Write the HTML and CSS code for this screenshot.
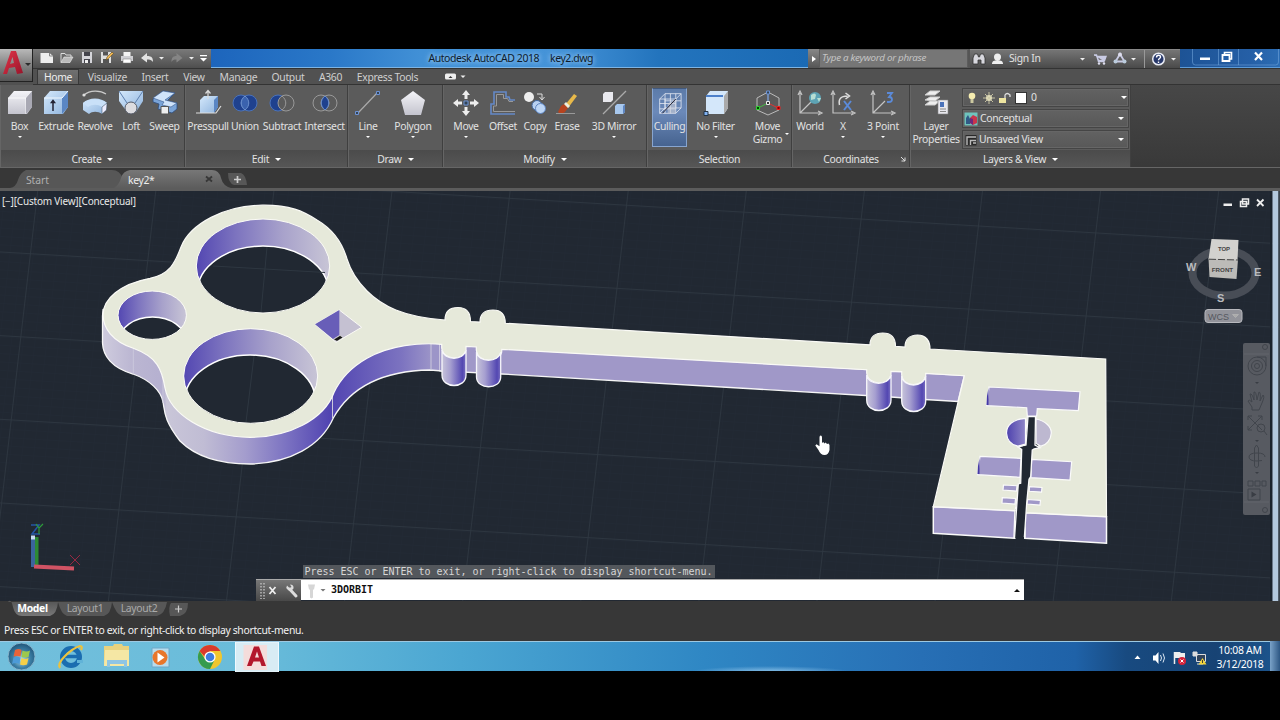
FILE: index.html
```html
<!DOCTYPE html>
<html lang="en">
<head>
<meta charset="utf-8">
<title>Autodesk AutoCAD 2018 - key2.dwg</title>
<link rel="stylesheet" href="styles.css">
</head>
<body>
<svg class="defs" width="0" height="0">
  <defs>
    <linearGradient id="gWhite" x1="0" y1="0" x2="0" y2="1"><stop offset="0" stop-color="#f4f4f8"/><stop offset="1" stop-color="#c4c4ce"/></linearGradient>
    <linearGradient id="gBlue" x1="0" y1="0" x2="1" y2="1"><stop offset="0" stop-color="#d4e8fb"/><stop offset="1" stop-color="#8fb4de"/></linearGradient>
    <linearGradient id="gRed" x1="0" y1="0" x2="1" y2="1"><stop offset="0" stop-color="#e2364a"/><stop offset="1" stop-color="#99142a"/></linearGradient>
  </defs>
</svg>
<div class="app">
  <header class="top">
    <div class="appbtn">
      <svg width="33" height="33" viewBox="0 0 33 33"><path d="M3 25 11 2h5l7 22-6 1-2-7-6 1-2 6zM10 15l4-1-1.500-6z" fill="url(#gRed)" fill-rule="evenodd"/><path d="M25 14h6l-3 3z" fill="#2b2b2b"/></svg>
    </div>
    <div class="titlebar">
      <div class="qat">
        <svg width="178" height="19" viewBox="33 49 178 19">
          <path d="M40.500 53h9l3.500 3v7H40.500z" fill="#eee"/><path d="M49.500 53v3H53" fill="none" stroke="#888"/>
          <path d="M61 62.500V53.500h4l1 1.500h5v2" fill="none" stroke="#ddd"/><path d="M61 62.500 64 57h9l-3 5.500z" fill="#bbb" stroke="#eee" stroke-width=".6"/>
          <path d="M82 52h10v11H82z" fill="#d5d5da"/><path d="M84 52h6v4h-6zM84 59h6v4h-6z" fill="#44444c"/><path d="M85 60h3v3h-3z" fill="#eee"/>
          <path d="M101 52h10v11h-10z" fill="#ddd"/><path d="M103 52h5v3.500h-5zM103 59h6v4h-6z" fill="#555"/><path d="m106 60 1-3 5-5 1.500 1.500-5 5z" fill="#efb654" stroke="#534016" stroke-width=".5"/>
          <path d="M123.500 52h7v4h-7z" fill="#f4f4f4"/><path d="M121 56h12v5h-12z" fill="#cfcfd3"/><path d="M123 59h8v4h-8z" fill="#fff" stroke="#777" stroke-width=".5"/>
          <path d="M147 53v3c5 0 6 2 6 6-1.500-2-3-2.500-6-2.500v3L141 58z" fill="#e3e3e3"/>
          <path d="M159 57h5l-2.500 2.500zM189 57h5l-2.500 2.500z" fill="#eee"/>
          <path d="M176 53v3c-4 0-5 2-5 6 1-2 2-2.500 5-2.500v3l6-4.500z" fill="#858585" transform="matrix(1 0 0 1 .5 0)"/>
          <path d="M200 55h7v1.200h-7zM200 58h7l-3.500 3.500z" fill="#fff"/>
        </svg>
      </div>
      <div class="caption"><span class="glow">Autodesk AutoCAD 2018</span><span class="glow">key2.dwg</span></div>
      <div class="search"><i class="searcharrow"></i><div class="searchbox">Type a keyword or phrase</div></div>
      <div class="info">
        <svg width="18" height="19" viewBox="970 49 18 19"><path d="M973 63v-6l1.500-4h3l1 3h1l1-3h3l1.500 4v6h-4v-4h-3v4z" fill="#d8d8de" stroke="#333" stroke-width=".8"/></svg>
        <svg width="18" height="19" viewBox="989 49 18 19"><circle cx="998.500" cy="56" r="3.500" fill="#eee"/><path d="M993 63c0-3 2-3.500 5.500-4 3.500.5 5.500 1 5.500 4z" fill="#eee"/></svg>
        <span class="signin">Sign In</span>
        <svg width="105" height="19" viewBox="1075 49 105 19"><path d="M1080 57h5l-2.500 2.500zM1131 57h5l-2.500 2.500zM1171 57h5l-2.500 2.500z" fill="#eee"/><path d="M1094 54h2.500l2 6.500h6M1097 55.500h9l-1.500 4h-6z" fill="#c9cbe4" stroke="#c9cbe4" stroke-width="1.400"/><circle cx="1099" cy="62.500" r="1.200" fill="#dde"/><circle cx="1104" cy="62.500" r="1.200" fill="#dde"/><path d="m1120 53-4.500 7.500h9z" fill="none" stroke="#c9cbe4" stroke-width="1.800"/><circle cx="1120" cy="53.500" r="2" fill="#dde"/><circle cx="1115.500" cy="60.500" r="2" fill="#bcd"/><circle cx="1124.500" cy="60.500" r="2" fill="#bcd"/><path d="M1144.500 49v19" stroke="#999"/><circle cx="1158.500" cy="58" r="5.800" fill="#27386b" stroke="#e9ecf5" stroke-width="1.500"/><path d="M1156.500 56.500c0-3 4-3 4-.5 0 1.500-2 1.500-2 3.200M1158.500 60.500v1.500" fill="none" stroke="#fff" stroke-width="1.400"/></svg>
      </div>
      <div class="winctl">
        <svg width="100" height="19" viewBox="1180 49 100 19"><path d="M1192.500 49v13q0 3 3 3h80q3 0 3-3V49M1218.500 49v16M1238.500 49v16" fill="none" stroke="#6ea1d8" opacity=".6"/><path d="M1200 57.500h10v2.500h-10z" fill="#fff"/><path d="M1224.500 52.500h7v6.500h-7z" fill="none" stroke="#fff" stroke-width="1.600"/><path d="M1222.500 55h7v6h-7z" fill="#2660a7" stroke="#fff" stroke-width="1.800"/><path d="m1255 52.500 7 7.500m0-7.500-7 7.500" stroke="#fff" stroke-width="2.200"/></svg>
      </div>
    </div>
    <nav class="tabs">
      <span class="tab on">Home</span><span class="tab">Visualize</span><span class="tab">Insert</span><span class="tab">View</span><span class="tab">Manage</span><span class="tab">Output</span><span class="tab">A360</span><span class="tab">Express Tools</span>
      <svg class="minrib" width="24" height="15" viewBox="444 69 24 15"><rect x="445" y="73.500" width="11" height="6" rx="1.500" fill="#eee"/><path d="M448.500 78h4l-2-2z" fill="#333"/><path d="M460.500 75.500h5l-2.500 2.500z" fill="#eee"/></svg>
    </nav>
  </header>

  <section class="ribbon">
    <div class="panel create"><div class="tools">
      <div class="tool"><svg viewBox="0 0 28 28"><path d="m2 9 6-7h18v16l-5 7H2z" fill="url(#gWhite)"/><path d="M2 9h18l6-7M20 9v16" fill="none" stroke="#fff" stroke-width=".8"/><path d="m20 9 6-7v16l-6 7z" fill="#a9a9b4"/></svg><b>Box</b><i></i></div>
      <div class="tool"><svg viewBox="0 0 28 28"><path d="m2 9 6-7h18v16l-5 7H2z" fill="url(#gBlue)"/><path d="m20 9 6-7v16l-6 7z" fill="#5a86c4"/><path d="M2 9h18l6-7" fill="none" stroke="#f0f8ff"/><path d="M11 22V12M9.500 13.500l1.500-2 1.500 2z" fill="#223" stroke="#223" stroke-width="1.500"/></svg><b>Extrude</b></div>
      <div class="tool"><svg viewBox="0 0 28 28"><path d="M3 6c6-5 16-5 22-1" fill="none" stroke="#ccc" stroke-width="1.200"/><circle cx="3" cy="6" r="1.600" fill="#ddd"/><path d="M2 14c6-6 18-6 24 0l-1 7-4 4c-4-3-10-3-13 0l-6-4z" fill="url(#gBlue)"/><path d="M2 14c6-5 18-5 24 0l-5 4c-4-3-10-3-14 0z" fill="#c9e0f8"/><path d="m21 18 5-4-.5 7-4.500 4z" fill="#eef" stroke="#345" stroke-width=".5"/></svg><b>Revolve</b></div>
      <div class="tool"><svg viewBox="0 0 28 28"><path d="M2 2h24v10l-7 11h-9L2 12z" fill="url(#gBlue)"/><path d="m2 2 8 12M26 2l-8 12" stroke="#5d7fae"/><circle cx="14" cy="19" r="6" fill="#dcdce0" stroke="#555a66"/></svg><b>Loft</b></div>
      <div class="tool"><svg viewBox="0 0 28 28"><path d="m2 10 10-8 12 2-8 8 10 2v6l-5 4-14-4 1-5-6-2z" fill="#7aa4d8" stroke="#2f4c7c" stroke-width=".8"/><path d="M2 9 12 2l12 2-10 7 12 3-6 4-9-2 2-3z" fill="#cfe3fa" stroke="#38588a" stroke-width=".6"/><path d="M10 17.500h7.500V25H10z" fill="#eee" stroke="#555"/></svg><b>Sweep</b></div>
    </div><div class="ptitle">Create<i></i></div></div>

    <div class="panel edit"><div class="tools">
      <div class="tool"><svg viewBox="0 0 28 28"><path d="m6 11 4-4h14v11l-4 6H6z" fill="url(#gBlue)"/><path d="m20 11 4-4v11l-4 6z" fill="#5a86c4"/><path d="M14 10V2M11.500 4.500l2.500-3 2.500 3M2 24h20l5-7" fill="none" stroke="#ddd" stroke-width="1.200"/></svg><b>Presspull</b></div>
      <div class="tool"><svg viewBox="0 0 28 28"><circle cx="10" cy="14" r="8" fill="#1f418e" stroke="#4a72ba"/><circle cx="18" cy="14" r="8" fill="#1f418e" stroke="#4a72ba"/><path d="M14 7c5 4 5 10 0 14-5-4-5-10 0-14z" fill="#3a62ae" stroke="#6c90cc"/></svg><b>Union</b></div>
      <div class="tool"><svg viewBox="0 0 28 28"><circle cx="10" cy="14" r="8" fill="#1f418e" stroke="#4a72ba"/><circle cx="18" cy="14" r="8" fill="#5b5b5b" stroke="#999"/><path d="M14 7c5 4 5 10 0 14" fill="none" stroke="#999"/></svg><b>Subtract</b></div>
      <div class="tool"><svg viewBox="0 0 28 28"><circle cx="10" cy="14" r="8" fill="none" stroke="#999"/><circle cx="18" cy="14" r="8" fill="none" stroke="#999"/><path d="M14 7c5 4 5 10 0 14-5-4-5-10 0-14z" fill="#1f418e" stroke="#6c90cc"/></svg><b>Intersect</b></div>
    </div><div class="ptitle">Edit<i></i></div></div>

    <div class="panel draw"><div class="tools">
      <div class="tool"><svg viewBox="0 0 28 28"><path d="M4 24 23 4" stroke="#aaa" stroke-width="1.200"/><path d="M1.500 22.500h3v3h-3zM22.500 2.500h3v3h-3z" fill="#345" stroke="#6d92d4"/></svg><b>Line</b><i></i></div>
      <div class="tool"><svg viewBox="0 0 28 28"><path d="m14 2 12 9-4 15H6L2 11z" fill="url(#gWhite)"/></svg><b>Polygon</b><i></i></div>
    </div><div class="ptitle">Draw<i></i></div></div>

    <div class="panel modify"><div class="tools">
      <div class="tool"><svg viewBox="0 0 28 28"><path d="m14 1 4 5h-2.500v4h-3V6H10zm0 26-4-5h2.500v-4h3v4H18zM1 14l5-4v2.500h4v3H6V18zm26 0-5 4v-2.500h-4v-3h4V10z" fill="#eee"/><path d="M12 12h4v4h-4z" fill="#345" stroke="#6d92d4"/></svg><b>Move</b><i></i></div>
      <div class="tool"><svg viewBox="0 0 28 28"><path d="M26 25H2V15h3V3h12v5h3l1 3h5" fill="none" stroke="#6489c8" stroke-width="1.600"/><path d="M26 22.500H4.500V17H7.500V5.500h7v4h4l1.500 3h4" fill="none" stroke="#999"/></svg><b>Offset</b></div>
      <div class="tool"><svg viewBox="0 0 28 28"><circle cx="8" cy="8" r="5" fill="#eee"/><path d="M16 5h5v5M18.500 8l2.500 3 2.500-3" fill="none" stroke="#ddd"/><circle cx="16" cy="16.500" r="5" fill="#b8d1f2" stroke="#40669e"/><circle cx="19.500" cy="19.500" r="5" fill="#bdd6f6" stroke="#5e85c0"/></svg><b>Copy</b></div>
      <div class="tool"><svg viewBox="0 0 28 28"><path d="m12 16 9-11 3 2-9 12z" fill="#e8b94a"/><path d="m8 17 3-2 4 4-3 4c-3 2-5 2-7 0z" fill="#b6431f"/><path d="m11 15 2-2 4 4-2 2z" fill="#eed"/><path d="M3 24.500h19" stroke="#999"/></svg><b>Erase</b></div>
      <div class="tool"><svg viewBox="0 0 28 28"><path d="M3 25 26 2" stroke="#aaa" stroke-width="1.300"/><path d="m3 5 2-2h8v8l-2 2H3z" fill="#e9e9ee"/><path d="m15 17 2-2h8v8l-2 2h-8z" fill="#a8c8ee"/><path d="m23 17 2-2v8l-2 2z" fill="#5e85c0"/></svg><b>3D Mirror</b><i></i></div>
    </div><div class="ptitle">Modify<i></i></div></div>

    <div class="panel selection"><div class="tools">
      <div class="tool active"><svg viewBox="0 0 28 28"><path d="m3 9 6-6h18v16l-6 6H3zM3 9h18v16M21 9l6-6M9 9v16M15 9v16M3 14h18M3 20h18M9 3v16h18M15 3v6M21 3v16M9 11h18M3 25l6-6" fill="none" stroke="#e5e9f3" stroke-width=".9"/><path d="m12 14 9-5v16h-9z" fill="#c8ccd6" opacity=".6"/><path d="M6 25 21 9" stroke="#223" stroke-width="1.100"/></svg><b>Culling</b></div>
      <div class="tool"><svg viewBox="0 0 28 28"><path d="m4 7 4-5h18v17l-4 6H4z" fill="#d4e7fa"/><path d="m22 7 4-5v17l-4 6z" fill="#aaa"/><path d="M4 7h17" stroke="#4d80ca" stroke-width="2"/><path d="M2 22.500h4v4H2z" fill="#7fb0f0" stroke="#234"/></svg><b>No Filter</b><i></i></div>
      <div class="tool gizmo"><svg viewBox="0 0 28 28"><path d="m14 3 11 6v12l-11 5-11-5V9zM14 3v11" fill="none" stroke="#bbb"/><path d="M14 14v-9" stroke="#5b8ad8"/><path d="m14 14 10 5" stroke="#d33"/><path d="M14 14 4 19" stroke="#4b4"/><path d="M12.500 2h3v3h-3z" fill="#345" stroke="#6d92d4"/><path d="M12.500 12.500h3v3h-3z" fill="#333" stroke="#eee"/><path d="M23 17.500h3v3h-3z" fill="#800" stroke="#e22"/><path d="M2.500 17.500h3v3h-3z" fill="#040" stroke="#3c3"/></svg><b>Move<br>Gizmo</b><i></i></div>
    </div><div class="ptitle">Selection</div></div>

    <div class="panel coord"><div class="tools">
      <div class="tool"><svg viewBox="0 0 28 28"><path d="M4 4v20h20M4 24l11-11M2 6l2-4 2 4M22 22l4 2-4 2" fill="none" stroke="#c4c4c4" stroke-width="1.200"/><circle cx="19" cy="9" r="6" fill="#5da3b4"/><path d="M15 6q4-3 5 0l-1 4-4 1zM21 9l4 0-2 4z" fill="#b7ded3"/></svg><b>World</b></div>
      <div class="tool"><svg viewBox="0 0 28 28"><path d="M4 4v20h20M2 6l2-4 2 4M22 22l4 2-4 2" fill="none" stroke="#c4c4c4" stroke-width="1.200"/><path d="M10.500 16q-2-9 8-9M16.500 4l4 3-4 3" fill="none" stroke="#ddd" stroke-width="1.500"/><path d="m15 12 7 9m0-9-7 9" stroke="#5b8ad8" stroke-width="2"/></svg><b>X</b><i></i></div>
      <div class="tool"><svg viewBox="0 0 28 28"><path d="M4 4v20h20M4 24l12-12M2 6l2-4 2 4M22 22l4 2-4 2" fill="none" stroke="#c4c4c4" stroke-width="1.200"/><path d="M18 4h5l-3 4c4 0 4 5 0 5h-2" fill="none" stroke="#5b8ad8" stroke-width="1.800"/></svg><b>3 Point</b><i></i></div>
    </div><div class="ptitle">Coordinates<svg class="launch" width="6" height="6" viewBox="0 0 6 6"><path d="m1 1 4 4M5 1.500V5H1.500" fill="none" stroke="#ddd"/></svg></div></div>

    <div class="panel layers"><div class="tools">
      <div class="tool props"><svg viewBox="0 0 28 28"><path d="m3 6 5-4h10l-5 4zm0 5 5-3h10l-5 4zm0 5 5-4h10l-5 4z" fill="#eee" stroke="#ccc"/><path d="M16 11h10v14H16z" fill="#e8e8ee" stroke="#888" stroke-width=".6"/><path d="M18 13h4v5h-4z" fill="#4a72ba"/><path d="M18 20h6M18 22.500h6" stroke="#888"/></svg><b>Layer<br>Properties</b></div>
      <div class="combos">
        <div class="combo"><svg width="56" height="16" viewBox="0 0 56 16"><circle cx="9" cy="6" r="3.300" fill="#f6edb0"/><path d="M7.500 9h3v4h-3z" fill="#ccc9a0"/><circle cx="26" cy="8" r="3" fill="#e8e4c4"/><path d="M26 2v12M20 8h12M22 4l8 8m0-8-8 8" stroke="#d0cca8" stroke-width=".9"/><path d="M36 8h7v5h-7z" fill="#eee5a0"/><path d="M42 8V5q2-3 5 0v2" fill="none" stroke="#ddd" stroke-width="1.300"/></svg><span class="swatch"></span><span>0</span><i></i></div>
        <div class="combo"><svg width="16" height="16" viewBox="0 0 16 16"><path d="M1.500 1.500h13v13h-13z" fill="#6fc3bd"/><path d="M3 13V7l2-3 2 4v5z" fill="#315a86"/><path d="m7 7 3-3 4 2v6l-4 2-3-2z" fill="#c8364c"/><path d="m7 7 3 1v6l-3-2z" fill="#6c2a7c"/></svg><span>Conceptual</span><i></i></div>
        <div class="combo"><svg width="15" height="16" viewBox="0 0 15 16"><path d="M2.500 3h11v10.500h-11z" fill="#292929"/><path d="M4 13V5h9M7.500 13V8.500H13M10 11h3" fill="none" stroke="#bbb" stroke-width="1.400"/></svg><span>Unsaved View</span><i></i></div>
      </div>
    </div><div class="ptitle">Layers &amp; View<i></i></div></div>
    <div class="rest"></div>
  </section>

  <div class="filetabs">
    <svg class="tabshapes" width="260" height="22" viewBox="0 168 260 22"><defs><linearGradient id="gTab" x1="0" y1="0" x2="0" y2="1"><stop offset="0" stop-color="#777"/><stop offset="1" stop-color="#5c5c5c"/></linearGradient></defs><path d="M10 188q6-1 8-8t8-10h86q8 0 11 9t6 9z" fill="#575757"/><path d="M114 188q5-3 7-10t9-8h82q7 0 9 8t10 10z" fill="url(#gTab)"/><path d="M228 173h13q5 2 6 12h-13q-6-2-6-12z" fill="#575757"/><path d="M234 179.500h7M237.500 176v7" stroke="#ccc" stroke-width="1.700"/><path d="m206 176.500 6 5m0-5-6 5" stroke="#373737" stroke-width="1.800"/></svg>
    <span class="ft start">Start</span><span class="ft cur">key2*</span>
  </div>

  <main class="viewport">
    <svg class="scene" width="1280" height="410" viewBox="0 191 1280 410">
      <defs>
        <pattern id="minor" width="11.730" height="8.310" patternUnits="userSpaceOnUse" patternTransform="matrix(1 .059 -.1157 1 32.800 254.600)"><path d="M0 .5h11.730M.5 0v8.310" stroke="#232b36" stroke-width=".5"/></pattern>
        <pattern id="major" width="117.300" height="83.100" patternUnits="userSpaceOnUse" patternTransform="matrix(1 .059 -.1157 1 30 253.200)"><path d="M0 .5h117.300M.5 0v83.100" stroke="#2e3741" stroke-width=".9"/></pattern>
        <linearGradient id="side" gradientUnits="userSpaceOnUse" x1="102" y1="0" x2="442" y2="0"><stop offset="0" stop-color="#cfccde"/><stop offset=".09" stop-color="#bbb6d2"/><stop offset=".18" stop-color="#b5b0d0"/><stop offset=".19" stop-color="#c9c6d8"/><stop offset=".3" stop-color="#c0bcd4"/><stop offset=".42" stop-color="#a49dcd"/><stop offset=".54" stop-color="#7c73c2"/><stop offset=".67" stop-color="#5144b1"/><stop offset=".75" stop-color="#6156b7"/><stop offset=".88" stop-color="#7c73c0"/><stop offset=".97" stop-color="#9c95c8"/></linearGradient>
        <linearGradient id="hole"><stop offset="0" stop-color="#5347b2"/><stop offset=".3" stop-color="#7d74bf"/><stop offset=".65" stop-color="#a8a2cb"/><stop offset="1" stop-color="#c8c5d6"/></linearGradient>
        <linearGradient id="arcL"><stop offset="0" stop-color="#4d41ae"/><stop offset="1" stop-color="#8f86c6"/></linearGradient>
        <linearGradient id="cyl"><stop offset="0" stop-color="#c7c4da"/><stop offset=".35" stop-color="#a69fd0"/><stop offset=".85" stop-color="#5347b2"/><stop offset="1" stop-color="#7a70c0"/></linearGradient>
        <clipPath id="h1"><ellipse cx="263" cy="266" rx="66.700" ry="47"/></clipPath>
        <clipPath id="h2"><ellipse cx="152.200" cy="315.200" rx="34.200" ry="24.200"/></clipPath>
        <clipPath id="h3"><ellipse cx="250.700" cy="376" rx="67" ry="47.300"/></clipPath>
      </defs>
      <path d="M0 191h1280v410H0z" fill="#212832"/><path d="M0 191h1280v410H0z" fill="url(#minor)"/><path d="M0 191h1280v410H0z" fill="url(#major)"/>
      <!-- extruded sides -->
      <path d="M102.500 316V343C103 356 112 368 133 374C150 380 161 391 163 402C165 413 164 420 180 441C195 456 220 464 250 464C290 463 321 446 333.300 418C345 397 370 371 430 370L442 371V335H380L320 345L250 400L163 360L103 310z" fill="url(#side)" stroke="#f6f6f6" stroke-width="1.300"/>
      <path d="M133.300 348v26M163 376v27M332.500 393v26M431 343v27" stroke="#cbc8dc" stroke-width="1"/>
      <path d="M440 343 964.300 375.700 958 401.500 925 399.500 891 397 502 374 440 371z" fill="#a098c8" stroke="#f6f6f6" stroke-width="1.300"/>
      <path d="M441 345v25" stroke="#a098c8" stroke-width="2.500"/>
      <path d="M933.300 506.700 1015 510.700 1014 538.300 933.300 533.300zM1025 512.700 1106.500 516.700V543.300L1025 538.300z" fill="#a098c8" stroke="#fafafa" stroke-width="1.500"/>
      <!-- top face -->
      <path d="M263 205.200C290 205 303 211 317 220C334 230 343 245 347 259C351 272 358 282 367 291C382 306 403 317 445 320C445 312 449 307.500 458 307.500C467 307.500 470.500 313 470.500 321.500L480 322C480 315 484 310 493 310C502 310 505.300 315 505.300 323.300L870 344.800C870 337 875 333 882.700 333C891 333 895.500 338 895.500 346.300L905 347C905 340 909 335 917.500 335C926 335 930 341 930 349L1105.700 359L1106.500 516.700L1025 512.700L1027 479L1032.300 449.300L1039 447L1035.700 416.700H1027.300L1025 445L1018 446.500L1021.700 449.300L1020 484L1015 510.700L933.300 506.700L964.300 375.700L925.700 373.300V376C924 387 903 388 901.700 375V371.700L891 371.300V375C889 386 868 386 866.700 373V369.700L501.700 349.300V352C499 363 478 364 476.300 350V347L466 346.500V350C464 361 443 361 441.700 348V344.300C420 342.500 390 345 367 358.300C350 368 340 380 334 392.500C324 420 288 437.300 250 437.300C205 437 170 414 165 388C162 369 157 357 133.300 348.300C112 341 103.300 328 103 315C103 299 120 284 150 278.300C170 274 175 263 181 247C190 224 225 205 263 205.200z" fill="#e6e9da" stroke="#fafaf6" stroke-width="1.200"/>
      <!-- round collars -->
      <g stroke="#f6f6fa" stroke-width="1.300" fill="url(#cyl)">
        <path d="M442 350C444 361 464 361 466 350V375C466 389 442 389 442 375z"/><path d="M476.500 352C478 363 499 363 500.700 352V377C500.700 390 476.500 390 476.500 377z"/><path d="M866.700 375C868 386 889 386 891 375V400C891 414 866.700 414 866.700 400z"/><path d="M901.700 376C903 388 924 388 925.700 376V401C925.700 415 901.700 415 901.700 401z"/>
      </g>
      <!-- bow holes -->
      <g clip-path="url(#h1)"><ellipse cx="263" cy="266" rx="66.700" ry="47" fill="url(#hole)"/><ellipse cx="263" cy="292" rx="65.500" ry="46" fill="#212832" stroke="#fff" stroke-width="1.500"/></g>
      <g clip-path="url(#h2)"><ellipse cx="152.200" cy="315.200" rx="34.200" ry="24.200" fill="url(#hole)"/><ellipse cx="152.500" cy="340.500" rx="33" ry="23.500" fill="#212832" stroke="#fff" stroke-width="1.500"/></g>
      <g clip-path="url(#h3)"><ellipse cx="250.700" cy="376" rx="67" ry="47.300" fill="url(#hole)"/><ellipse cx="250" cy="401.500" rx="65.500" ry="46.500" fill="#212832" stroke="#fff" stroke-width="1.500"/></g>
      <path d="M267 247 261 312M213 266l112 6.500M254 356l-8 66" stroke="#2e3741" fill="none"/>
      <g fill="none" stroke="#fbfbf6"><ellipse cx="263" cy="266" rx="66.700" ry="47"/><ellipse cx="152.200" cy="315.200" rx="34.200" ry="24.200"/><ellipse cx="250.700" cy="376" rx="67" ry="47.300"/></g>
      <path d="M339.300 310 315 324.300 336 342.300 361.700 327.300z" fill="#c5c1d2" stroke="#fbfbf6"/><path d="M339.300 310 315 324.300 333 339 339.300 335z" fill="#685eb8"/><path d="M333.500 339.500 340 335.500 343 337.500 337 341.300z" fill="#151515" stroke="#fbfbf6" stroke-width=".5"/>
      <!-- bit cutouts -->
      <g fill="#a098c8" stroke="#fafafa" stroke-width="1.200">
        <path d="M989 387 1080 391.700 1078.300 410.700 1037.300 408.700 1036.700 416H1027.300L1026.700 407.700 986.700 405.700z"/>
        <path d="M980 456.300 1021 458.300 1020 477.300 977.700 474.700zM1031.700 459.300 1071.700 461.700 1070 480 1030.700 477.700z"/>
        <path d="M1003.500 485 1017 485.700 1016.500 491 1003 490zM1002.300 497.700 1015.500 498.500 1015 504 1002 503zM1029.500 486.700 1042 487.500 1041.500 492 1029.200 491.300zM1027.500 499.500 1040.500 500.300 1040 505 1027 504z"/>
        <path d="M1025.500 418.300C1012 419 1006.500 426 1006.500 433C1007 441 1012 445 1018 446.200L1025.500 444z" fill="url(#arcL)"/><path d="M1036 419C1046 421 1051.300 427 1051.300 433C1051 440 1046 445 1041 446.200L1036 443.500z" fill="#bdb8d0"/>
      </g>
      <path d="M987 396 988.500 388V405h-2zM978 466l1.500-8v16h-2z" fill="#4539a6"/>
      <path d="M1028 416.700H1035.500L1035 445 1040 447.700 1032.300 449.300 1030.700 476.700 1029 479.300 1026.700 503 1024.300 538.300H1014.500L1018.300 484 1020.700 483.300 1021.700 449.300 1018 447 1026 445z" fill="#212832" stroke="#fafafa" stroke-width="1.300"/><path d="M1015.500 537h8.500v4h-8.500zM1023 446.500h12.500l-3.500 3h-9z" fill="#212832"/>
      <!-- hand cursor -->
      <path d="M819.500 437.500q0-2 1.200-2 1.300 0 1.300 2v5.500l1.200-1 1.300 1.500 1.200-1 1.300 1.500 1.500-.5 1 1.500v5q-1 5-5 5-4 0-6-5l-3.200-4.500 1.200-1.300 3 2z" fill="#fff"/>
      <!-- UCS icon -->
      <path d="M36.500 537v31" stroke="#2d8a35" stroke-width="4"/><path d="M33 537v30" stroke="#3b649c" stroke-width="4"/><path d="M31 535.500h4v4h-4z" fill="#c8dcf4"/><path d="M34 566.500 74 568.500" stroke="#d05364" stroke-width="4"/><path d="m70 555 10 10m0-10-10 10" stroke="#982741" fill="none"/><path d="M31 525h8l-7 9h8" stroke="#2456a5" stroke-width="1.500" fill="none"/><path d="m36 524 3 4 4-4M39 528v6" stroke="#2d9a3a" fill="none" stroke-width="1.200"/>
      <!-- view cube -->
      <ellipse cx="1224" cy="273" rx="31.500" ry="22.500" fill="none" stroke="#484d56" stroke-width="8"/>
      <path d="M1208.500 258.500 1238 259.500 1236.500 279 1209.500 277z" fill="#bcbbb8"/><path d="M1211.500 239 1238.500 240 1237.500 260 1208.500 259z" fill="#d2d1ce"/><path d="M1209 259.200 1238 260" stroke="#444" stroke-width="1" stroke-dasharray="7 2"/>
      <g class="cubetext"><text x="1224" y="251" font-size="6">TOP</text><text x="1222.500" y="271.500" font-size="6.200">FRONT</text></g>
      <g class="compass"><text x="1191" y="271">W</text><text x="1257.500" y="276">E</text><text x="1220.500" y="302">S</text></g>
      <rect x="1205" y="309.500" width="37" height="13" rx="3" fill="#92939a" stroke="#b8b9be"/><text class="wcs" x="1208" y="319.500">WCS</text><path d="M1232.500 314.500h6l-3 3z" fill="#aaa" stroke="#bbb" stroke-width=".6"/>
      <!-- drawing window buttons -->
      <path d="M1223.500 203.500h8.500v2.500h-8.500z" fill="#eee"/><path d="M1242.500 199h6v5h-6zM1240.500 201.500h6v5h-6z" fill="#212832" stroke="#eee" stroke-width="1.500"/><path d="m1257 199.500 6.500 6.500m0-6.500-6.500 6.500" stroke="#eee" stroke-width="1.800"/>
      <!-- navigation bar -->
      <rect x="1243" y="343" width="27" height="172" rx="2" fill="#575a61"/><path d="M1244 354h25M1244 502h25" stroke="#62656c"/>
      <g fill="none" stroke="#41454c"><circle cx="1257" cy="366" r="9"/><circle cx="1257" cy="366" r="5.500"/><circle cx="1257" cy="366" r="2.500"/><path d="M1266 357v9M1257 357h9"/><path d="m1252 407-4-6q1-2 4 1l-2-8q2-1 4 6l0-8q2-1 3 8l2-8q2 0 1 9l3-6q2 1-1 8l-3 7h-7zM1248 416l14 14M1262 416l-14 14M1248 420v-4h4M1258 416h4v4M1248 426v4h4"/><circle cx="1261" cy="428" r="4"/><path d="m1264 431 3 4M1254.500 466v-18l2-3 2 3v18l-2 2zM1265 457q0-4-8-4t-8 4 8 4l5-.5M1248 481h5v5h-5zM1255 481h5v5h-5zM1262 481h4v5h-4zM1248 489h12v11h-12z"/><circle cx="1265" cy="347" r="2.500"/><circle cx="1265" cy="510" r="2.500"/></g><path d="m1251.500 491.500 5 3-5 3zM1255 382h4l-2 2zM1255 440h4l-2 2zM1255 472h4l-2 2z" fill="#393d44"/>
      <path d="M1270 191h2v410h-2z" fill="#1b232c"/><path d="M1272.500 191h6v410h-6z" fill="#b3c8dd"/><path d="M1278.500 191h1.500v410h-1.500z" fill="#39424b"/>
    </svg>
    <div class="vplabel">[−][Custom View][Conceptual]</div>
    <div class="cmd">
      <div class="history">Press ESC or ENTER to exit, or right-click to display shortcut-menu.</div>
      <div class="cmdline"><svg class="grip" width="45" height="21" viewBox="256 579 45 21"><path d="M261 582v16M264 582v16" stroke="#bbb" stroke-width="1.500" stroke-dasharray="1.500 1.500"/><path d="m269.500 586 6 7m0-7-6 7" stroke="#eee" stroke-width="1.800"/><path d="m289.500 588 6.500 7" stroke="#ddd" stroke-width="3" stroke-linecap="round"/><path d="M287 584.500l2.500 2.500 2-1-1.500-2.500q4 0 3.500 4-3 4-6 1-2-2-.5-4z" fill="#ddd"/></svg><svg width="28" height="21" viewBox="301 579 28 21"><path d="M308 583.500h7l-1 5h-1v8l-1.500 1-1.500-1v-8h-1z" fill="#d6d6d6"/><path d="M320.500 588h5l-2.500 2.500z" fill="#777"/></svg><span>3DORBIT</span><i></i></div>
    </div>
  </main>

  <footer class="bottom">
    <div class="layouts"><svg class="layshapes" width="200" height="18" viewBox="0 600 200 18"><defs><linearGradient id="gLay" x1="0" y1="0" x2="0" y2="1"><stop offset="0" stop-color="#555"/><stop offset="1" stop-color="#787878"/></linearGradient></defs><path d="M8 602h50q-1 12-8 14H22q-7 0-9-9t-5-5z" fill="url(#gLay)"/><path d="M58 602h54q-1 12-8 14H67q-6-2-9-14zM112 602h55q-2 12-10 14h-35q-6-2-10-14zM171 603h17q0 11-8 13h-10q-2-9 1-13z" fill="#575757"/><path d="M175 609h7M178.500 605.500v7" stroke="#ccc" stroke-width="1.200"/></svg><span class="lay on">Model</span><span class="lay">Layout1</span><span class="lay">Layout2</span></div>
    <div class="status">Press ESC or ENTER to exit, or right-click to display shortcut-menu.</div>
  </footer>

  <div class="taskbar">
    <svg width="280" height="30" viewBox="0 641 280 30"><defs><radialGradient id="orb" cx=".5" cy=".6" r=".55"><stop offset="0" stop-color="#b5e0ef"/><stop offset=".6" stop-color="#3b7ea4"/><stop offset="1" stop-color="#245b80"/></radialGradient></defs>
      <circle cx="21.500" cy="655.500" r="13.500" fill="url(#orb)" stroke="#85b4cc"/><path d="M15 649q4-2 6.500 0l-1 6.500q-4-1-7 0z" fill="#e8633a"/><path d="M22.500 649.500q4 2 7.500 0l-1.500 6.500q-4 1-7 0z" fill="#9dc84d"/><path d="M13.500 656.500q3-1.500 7 0l-1 6.500q-4-2-7.500 0z" fill="#4d9bd8"/><path d="M21.500 657q3 2 7 0l-1.500 6.500q-4 1.500-7 0z" fill="#f6cf47"/>
      <circle cx="71" cy="656" r="8.500" fill="none" stroke="#1b6db0" stroke-width="5"/><path d="M65 655.500h15" stroke="#1b6db0" stroke-width="3.500"/><path d="M77 659h6v3h-6z" fill="#61b3d8"/><path d="M60 667q-3-4 5-12t15-10q3 0 1 4" fill="none" stroke="#ecc23e" stroke-width="2.200"/>
      <path d="M104 645h9l1-2h8l1 2h6v20h-25z" fill="#e8d27f"/><path d="M105 649h24v16h-25z" fill="#f5e7a4"/><path d="M107 659h20v7h-3v-3h-14v3h-3z" fill="#8fc5e4"/>
      <path d="M152 647h17v19h-17z" fill="#b7dced" stroke="#6ea8c9"/><circle cx="160" cy="656.500" r="7.500" fill="#e8762b"/><path d="m157.500 651.500 7 5-7 5z" fill="#fff"/>
      <circle cx="210" cy="656" r="12" fill="#f1c62f"/><path d="M199.600 650A12 12 0 0 0 210 668L214 660 205 658z" fill="#359b4e"/><path d="M199.600 650A12 12 0 0 1 220.400 650H210l-5 6z" fill="#d93a2c"/><circle cx="210" cy="656" r="5.600" fill="#fff"/><circle cx="210" cy="656" r="4.300" fill="#3e7de0"/>
      <path d="M235.500 641h43v30h-43z" fill="#d8ecf4" stroke="#eff9ff"/><path d="M243.500 644h23.500v25h-23.500z" fill="#f4dcdb"/><path d="M247 665 254 645.500h5l7 19.500h-4.500l-1.500-4.500h-6.500l-2 4.500zM255 656.500h4l-2-6z" fill="#b3172c" fill-rule="evenodd"/></svg>
    <div class="tray"><svg width="80" height="30" viewBox="1130 641 80 30"><path d="M1134.500 658h6l-3-3.500z" fill="#fff"/><path d="M1153 654.500h2.500l3-3.500v12l-3-3.500h-2.500z" fill="#fff"/><path d="M1160.500 654q2 3 0 6M1163 652.500q3 4.500 0 9" fill="none" stroke="#dce8f4"/><path d="M1174.500 651v12" stroke="#eee" stroke-width="1.500"/><path d="M1175 651h5l1 1h4v6h-5l-1-1h-4z" fill="#eee"/><circle cx="1182" cy="660" r="4" fill="#d5243b"/><path d="m1180.500 658.500 3 3m0-3-3 3" stroke="#fff"/><path d="M1196.500 653.500h9v7h-9z" fill="#31445c" stroke="#ddd"/><path d="M1193 651h4v4h-4zM1197 663h6" fill="#ddd" stroke="#ddd"/><path d="m1202.500 657-4 6.500h8z" fill="#f3d43a"/><path d="M1202.500 659v3" stroke="#443"/></svg><div class="clock"><span>10:08 AM</span><span>3/12/2018</span></div><div class="peek"></div></div>
  </div>
</div>
</body>
</html>
```
FILE: styles.css
```css
* { box-sizing: border-box; }
body { margin: 0; width: 1280px; height: 720px; overflow: hidden; background: #000; font-family: "Noto Sans", "Open Sans", sans-serif; font-size: 10.4px; letter-spacing: -.33px; line-height: 13px; color: #e2e2e2; }
svg { display: block; flex: none; }
.defs { position: absolute; }
.app { margin-top: 49px; height: 622px; display: flex; flex-direction: column; background: #373737; white-space: nowrap; }

.top { display: grid; grid-template-columns: 33px 1fr; grid-template-rows: 19px 17px; height: 36px; background: #515151; flex: none; }
.appbtn { grid-row: 1 / 3; height: 33px; background: linear-gradient(#b9b9b9, #8d8d8d 40%, #555); border: 1px solid #222; border-top: 0; border-left: 0; overflow: hidden; }
.titlebar { display: flex; background: linear-gradient(#777, #4c4c4c); height: 19px; }
.qat { width: 178px; background: linear-gradient(#7a7a7a, #4e4e4e); }
.caption { width: 597px; display: flex; gap: 11px; padding: 3px 0 0 217.5px; color: #0d1b2c; background: linear-gradient(90deg, #1d65bc, #2a78c8 20%, #4190d6 35%, #4593d8 58%, #2374bd 75%, #1b6ab4); border-bottom: 1px solid #7db4e4; letter-spacing: -.46px; font-size: 10.5px; }
.glow { text-shadow: 0 0 6px #a7d0f5, 0 0 4px #8ec2f0; }
.search { width: 162px; display: flex; background: #555; }
.searcharrow { width: 11px; background: linear-gradient(#888, #555); display: flex; align-items: center; justify-content: center; }
.searcharrow::before { content: ""; border: 3.5px solid transparent; border-left: 4px solid #fff; border-right: 0; }
.searchbox { width: 149px; background: #767676; border: 1px solid #5c5c5c; font-style: italic; font-size: 9.8px; letter-spacing: -.27px; padding: 1px 0 0 2px; color: #c4c4c4; }
.info { width: 210px; display: flex; background: linear-gradient(#757575, #4a4a4a); border-top: 1px solid #888; }
.signin { width: 69px; padding: 2px 0 0 3px; }
.winctl { flex: 1; background: linear-gradient(90deg, #1d5395, #255fa6 70%, #2c6db4); border-bottom: 1px solid #5e9bd6; }
.tabs { display: flex; padding-left: 4px; border-top: 1px solid #333; border-bottom: 1px solid #333; }
.tab { text-align: center; padding-top: 2px; color: #cfcfcf; width: 57px; }
.tab.on { width: 42px; background: linear-gradient(#707070, #5f5f5f); border: 1px solid #383838; border-bottom: 0; padding-top: 1px; color: #eee; }
.tab:nth-child(3) { width: 38px; } .tab:nth-child(4) { width: 40px; } .tab:nth-child(5) { width: 49px; }
.tab:nth-child(6) { width: 50px; } .tab:nth-child(7) { width: 35px; } .tab:nth-child(8) { width: 79px; }
.minrib { margin-left: 17px; }

.ribbon { display: flex; height: 83px; background: #5b5b5b; flex: none; border-bottom: 1px solid #666; }
.panel { border-right: 1px solid #3f3f3f; border-left: 1px solid #656565; display: flex; flex-direction: column; }
.tools { height: 65px; display: flex; }
.tool { display: flex; flex-direction: column; align-items: center; height: 62px; padding-top: 4px; position: relative; }
.tool svg { width: 28px; height: 28px; }
.tool b { font-weight: 400; text-align: center; margin-top: 3px; }
.tool > i, .ptitle i, .combo > i { border: 3px solid transparent; border-top: 3px solid #fff; border-bottom: 0; }
.tool > i { border-width: 2.500px; border-bottom: 0; margin-top: 3px; }
.ptitle { flex: 1; display: flex; align-items: center; justify-content: center; gap: 6px; padding-top: 1px; background: linear-gradient(#4b4b4b, #565656); position: relative; }
.create { width: 185px; } .create .tools { padding-left: 2px; }
.create .tool:nth-child(1), .create .tool:nth-child(5) { width: 33px; }
.create .tool:nth-child(2) { width: 40px; } .create .tool:nth-child(3) { width: 38px; } .create .tool:nth-child(4) { width: 34px; }
.edit { width: 163px; } .edit .tools { padding-left: 1px; } .edit .tool { width: 42px; } .edit .tool:nth-child(2) { width: 32px; } .edit .tool:nth-child(4) { width: 43px; }
.draw { width: 95px; } .draw .tools { padding-left: 1px; } .draw .tool { width: 36px; } .draw .tool:nth-child(2) { width: 54px; }
.modify { width: 204px; } .modify .tools { padding-left: 2px; } .modify .tool { width: 34px; } .modify .tool:nth-child(1) { width: 40px; } .modify .tool:nth-child(3) { width: 30px; } .modify .tool:nth-child(5) { width: 60px; }
.selection { width: 145px; } .selection .tools { padding-left: 4px; } .selection .tool { width: 57px; }
.selection .active { width: 35px; height: 59px; margin-top: 3px; padding-top: 1px; background: linear-gradient(#5c7ba9, #6b89b9 40%, #46638f); border: 1px solid #88a5cf; border-top-color: #42597d; }
.selection .active b { margin-top: 2px; }
.selection .active svg { width: 25px; height: 27px; }
.selection .active b { margin-top: 3px; }
.selection .gizmo { width: 47px; } .gizmo > i { position: absolute; right: 2px; top: 45px; }
.coord { width: 118px; } .coord .tools { padding-left: 0; } .coord .tool { width: 34px; } .coord .tool:nth-child(2) { width: 32px; } .coord .tool:nth-child(3) { width: 48px; }
.launch { position: absolute; right: 3px; top: 6px; }
.layers { width: 221px; } .layers .tools { padding-left: 1px; } .props { width: 48px; }
.combos { margin: 3px 0 0 2px; display: flex; flex-direction: column; gap: 2px; width: 167px; }
.combo { height: 19px; border: 1px solid #454545; background: linear-gradient(#626262, #585858); display: flex; align-items: center; gap: 1px; padding: 0 4px 0 0; outline: 1px solid #666; outline-offset: -2px; }
.combo > i { margin-left: auto; }
.combo:first-child { gap: 0; padding-right: 1px; }
.swatch { width: 12px; height: 12px; background: #fff; border: 1px solid #333; margin: 0 4px 0 -4px; }
.rest { flex: 1; background: linear-gradient(#474747, #393939); }

.filetabs { height: 23px; position: relative; flex: none; border-bottom: 3px solid #5c5c5c; display: flex; padding: 6px 0 0 26px; }
.tabshapes { position: absolute; left: 0; top: 0; }
.ft { position: relative; } .start { width: 102px; color: #b0b0b0; letter-spacing: -.1px; } .cur { color: #eee; }

.viewport { position: relative; height: 410px; flex: none; overflow: hidden; }
.cubetext { font-family: "Liberation Sans", sans-serif; font-weight: 700; fill: #444; text-anchor: middle; letter-spacing: 0; }
.compass { font: 700 11px "Liberation Sans", sans-serif; fill: #b9bbbe; text-anchor: middle; }
.wcs { font: 9px "Liberation Sans", sans-serif; fill: #55575e; letter-spacing: 0; }
.vplabel { position: absolute; left: 2px; top: 4px; font-size: 10px; letter-spacing: -.2px; color: #e8e8e8; }
.cmd { position: absolute; left: 256px; bottom: 1px; width: 768px; font-family: "DejaVu Sans Mono", monospace; font-size: 10px; letter-spacing: -.02px; }
.history { margin-left: 47px; width: 412px; height: 13px; padding-left: 1.500px; background: #53575c; color: #d6d6d6; line-height: 13px; }
.cmdline { height: 21px; background: #fff; border-top: 1px solid #aaa; display: flex; align-items: center; color: #111; font-weight: 700; margin-top: 1px; }
.cmdline span { margin: -2px 0 0 2px; }
.grip { background: linear-gradient(#777, #484848); }
.cmdline > i { margin: 0 4px 0 auto; border: 3px solid transparent; border-bottom: 3px solid #111; border-top: 0; }

.bottom { height: 40px; flex: none; }
.layouts { height: 17px; position: relative; display: flex; padding: 1px 0 0 6px; }
.layshapes { position: absolute; left: 0; top: -1px; }
.lay { position: relative; width: 54px; text-align: center; color: #aaa; padding-left: 2px; }
.lay.on { width: 51px; font-weight: 700; color: #fff; }
.status { padding: 6px 0 0 4px; color: #f2f2f2; }

.taskbar { height: 30px; display: flex; justify-content: space-between; border-top: 1px solid #9dc9e2; background: radial-gradient(ellipse 80px 6px at 770px 30px, #8cc2e8, transparent), linear-gradient(90deg, #72bfdc, #69bcda 20%, #4ba6d2 36%, #2f87c4 55%, #276fb5 72%, #1f62a8 84%, #184a80 88%, #174374 95%, #1d568f); }
.tray { display: flex; }
.clock { width: 60px; display: flex; flex-direction: column; align-items: center; line-height: 14px; color: #fff; padding-top: 1px; letter-spacing: -.25px; }
.peek { width: 10px; background: linear-gradient(90deg, #7aa2c8, #2d5784); margin-top: -1px; }
```
